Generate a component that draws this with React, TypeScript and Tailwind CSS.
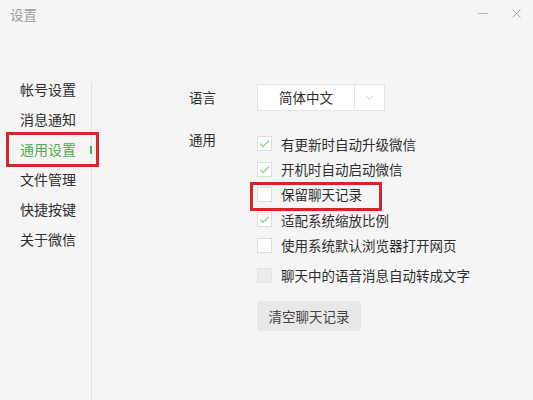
import React from "react";

const font = { fontFamily: '"Noto Sans CJK SC", "Noto Sans", sans-serif' };

function CheckBox({ checked, disabled }: { checked?: boolean; disabled?: boolean }) {
  return (
    <span
      className={`w-[15px] h-[15px] shrink-0 border flex items-center justify-center ${
        disabled ? "bg-[#ececec] border-[#e4e4e4]" : "bg-white border-[#dcdcdc]"
      }`}
    >
      {checked && (
        <svg width="11" height="9" viewBox="0 0 11 9" fill="none">
          <path d="M1 4.5l3 3 6-6" stroke="#8fcf9c" strokeWidth="1.3" />
        </svg>
      )}
    </span>
  );
}

export default function App() {
  const navItems = ["帐号设置", "消息通知", "通用设置", "文件管理", "快捷按键", "关于微信"];
  const options = [
    { text: "有更新时自动升级微信", checked: true },
    { text: "开机时自动启动微信", checked: true },
    { text: "保留聊天记录", checked: false },
    { text: "适配系统缩放比例", checked: true },
    { text: "使用系统默认浏览器打开网页", checked: false },
  ];

  return (
    <div className="relative w-[533px] h-[400px] bg-[#f5f5f5] flex flex-col overflow-hidden text-[#2e2e2e]" style={font}>
      {/* titre */}
      <div className="h-[26px] flex items-center justify-between pl-[10px] pr-[12px] shrink-0">
        <span className="text-[13.5px] text-[#9a9a9a] leading-none mt-[4px]">设置</span>
        <div className="flex items-center gap-[24px]">
          <span className="w-[10px] h-px bg-[#b5b5b5]" />
          <svg width="9" height="9" viewBox="0 0 9 9">
            <path d="M0.5 0.5l8 8M8.5 0.5l-8 8" stroke="#a8a8a8" strokeWidth="1" />
          </svg>
        </div>
      </div>

      <div className="flex flex-1">
        {/* menu latéral */}
        <div className="w-[92px] shrink-0 pt-[56px] flex flex-col">
          <div className="flex-1 border-r border-[#e3e3e3] relative">
            <ul className="-mt-[8px] flex flex-col">
              {navItems.map((item) => (
                <li
                  key={item}
                  className={`h-[30px] flex items-center pl-[20px] text-[14px] ${
                    item === "通用设置" ? "text-[#4db04d]" : "text-[#2e2e2e]"
                  }`}
                >
                  {item}
                </li>
              ))}
            </ul>
            <span className="absolute right-[-1px] top-[64px] w-[2px] h-[8px] bg-[#4db04d]" />
          </div>
        </div>

        {/* contenu */}
        <div className="flex-1 pl-[97px] pt-[58px] text-[13.5px]">
          <div className="flex items-center">
            <span className="w-[68px]">语言</span>
            <div className="flex h-[27px] w-[128px] bg-white border border-[#e4e4e4]">
              <span className="flex-1 flex items-center justify-center border-r border-[#e4e4e4]">简体中文</span>
              <span className="w-[29px] flex items-center justify-center">
                <svg width="9" height="6" viewBox="0 0 9 6" fill="none">
                  <path d="M0.5 0.5l4 4 4-4" stroke="#c8c8c8" strokeWidth="1" />
                </svg>
              </span>
            </div>
          </div>

          <div className="flex mt-[20px]">
            <span className="w-[68px] -mt-[2px]">通用</span>
            <div className="flex flex-col">
              {options.map((o) => (
                <div key={o.text} className="h-[25.4px] flex items-center gap-[9px]">
                  <CheckBox checked={o.checked} />
                  <span>{o.text}</span>
                </div>
              ))}
              <div className="h-[25px] mt-[5px] flex items-center gap-[9px]">
                <CheckBox disabled />
                <span>聊天中的语音消息自动转成文字</span>
              </div>
              <button className="mt-[13px] w-[104px] h-[30px] bg-[#e8e8e8] rounded-[3px] text-[#444] text-[13.5px]">
                清空聊天记录
              </button>
            </div>
          </div>
        </div>
      </div>

      {/* annotations rouges */}
      <div className="absolute left-[6px] top-[132px] w-[93px] h-[35px] border-[3px] border-[#d7252b]" />
      <div className="absolute left-[250px] top-[182px] w-[132px] h-[29px] border-[3px] border-[#d7252b]" />
    </div>
  );
}
